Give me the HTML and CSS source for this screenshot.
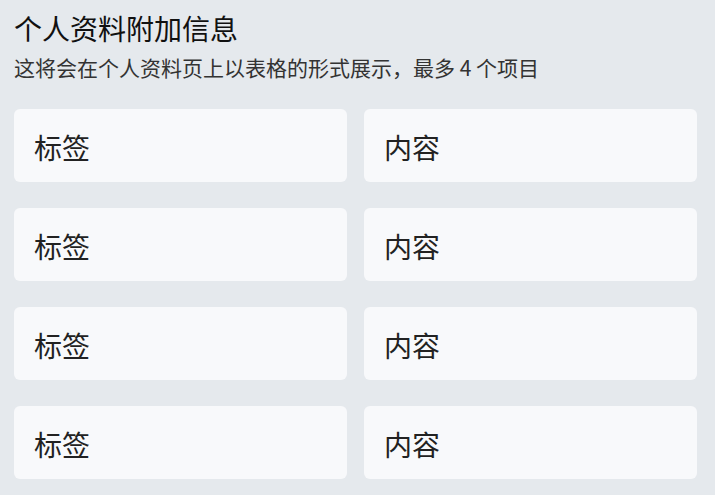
FILE: index.html
```html
<!DOCTYPE html>
<html lang="zh-CN">
<head>
  <meta charset="UTF-8" />
  <meta name="viewport" content="width=device-width, initial-scale=1.0" />
  <title>个人资料附加信息</title>
  <link rel="stylesheet" href="styles.css">
</head>
<body>
  <div class="section">
    <h2 class="title">个人资料附加信息</h2>
    <p class="hint">这将会在个人资料页上以表格的形式展示，最多 4 个项目</p>

    <div class="fields">
      <div class="field">标签</div>
      <div class="field">内容</div>
      <div class="field">标签</div>
      <div class="field">内容</div>
      <div class="field">标签</div>
      <div class="field">内容</div>
      <div class="field">标签</div>
      <div class="field">内容</div>
    </div>
  </div>
</body>
</html>
```

FILE: styles.css
```css
html, body {
  margin: 0;
  padding: 0;
  height: 100%;
  overflow: hidden;
  background-color: #e5e9ed;
  font-family: "Noto Sans CJK SC", "Noto Sans", sans-serif;
}

.section {
  padding: 9px 18px 0 14px;
}

.title {
  margin: 0;
  font-size: 28px;
  font-weight: normal;
  line-height: 38px;
  color: #111;
}

.hint {
  margin: 6px 0 0;
  font-size: 21px;
  line-height: 28px;
  color: #333;
}

.fields {
  display: grid;
  grid-template-columns: 1fr 1fr;
  gap: 26px 17px;
  margin-top: 28px;
}

.field {
  height: 73px;
  box-sizing: border-box;
  padding: 2px 20px 0;
  display: flex;
  align-items: center;
  background: #f8f9fb;
  border-radius: 6px;
  font-size: 28px;
  color: #222;
}
```
